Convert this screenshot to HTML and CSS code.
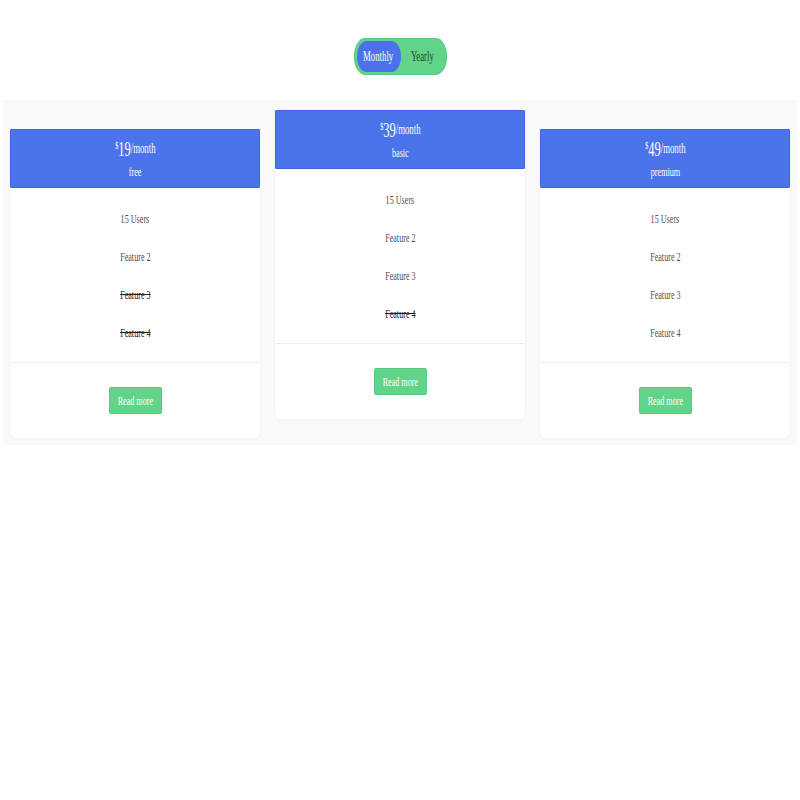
FILE: index.html
```html
<!DOCTYPE html>
<html lang="en">
<head>
<meta charset="utf-8">
<title>Pricing</title>
<link rel="stylesheet" href="styles.css">
</head>
<body>
<div class="toggle">
  <span class="seg active"><span class="sx">Monthly</span></span>
  <span class="seg"><span class="sx">Yearly</span></span>
</div>
<section class="plans">
  <article class="card side">
    <header class="head">
      <div class="price"><span class="sx"><sup>$</sup><span class="amt">19</span><span class="per">/month</span></span></div>
      <div class="name"><span class="sx">free</span></div>
    </header>
    <ul class="features">
      <li><span class="sx">15 Users</span></li>
      <li><span class="sx">Feature 2</span></li>
      <li class="off"><span class="sx">Feature 3</span></li>
      <li class="off"><span class="sx">Feature 4</span></li>
    </ul>
    <footer class="foot"><button class="btn"><span class="sx">Read more</span></button></footer>
  </article>
  <article class="card">
    <header class="head">
      <div class="price"><span class="sx"><sup>$</sup><span class="amt">39</span><span class="per">/month</span></span></div>
      <div class="name"><span class="sx">basic</span></div>
    </header>
    <ul class="features">
      <li><span class="sx">15 Users</span></li>
      <li><span class="sx">Feature 2</span></li>
      <li><span class="sx">Feature 3</span></li>
      <li class="off"><span class="sx">Feature 4</span></li>
    </ul>
    <footer class="foot"><button class="btn"><span class="sx">Read more</span></button></footer>
  </article>
  <article class="card side">
    <header class="head">
      <div class="price"><span class="sx"><sup>$</sup><span class="amt">49</span><span class="per">/month</span></span></div>
      <div class="name"><span class="sx">premium</span></div>
    </header>
    <ul class="features">
      <li><span class="sx">15 Users</span></li>
      <li><span class="sx">Feature 2</span></li>
      <li><span class="sx">Feature 3</span></li>
      <li><span class="sx">Feature 4</span></li>
    </ul>
    <footer class="foot"><button class="btn"><span class="sx">Read more</span></button></footer>
  </article>
</section>
</body>
</html>
```

FILE: styles.css
```css
html, body {
  margin: 0;
  padding: 0;
  background: #ffffff;
}
body {
  font-family: "Liberation Serif", "Times New Roman", serif;
  color: #444;
  padding-top: 38px;
}
.sx {
  display: inline-block;
  transform: scaleX(0.625);
  transform-origin: 50% 50%;
  white-space: nowrap;
}
.toggle {
  width: 87px;
  height: 31px;
  margin: 0 auto;
  padding: 3px;
  background: #62d48a;
  border-radius: 12px / 19px;
  display: flex;
  box-shadow: inset 0 0 0 1px #58cc80;
}
.seg {
  width: 43px;
  min-width: 0;
  flex: 0 0 43px;
  display: flex;
  align-items: center;
  justify-content: center;
  font-size: 14px;
  color: #2e3a32;
  border-radius: 10px / 16px;
  overflow: visible;
}
.seg.active {
  flex-basis: 44px;
  background: #4b72ea;
  color: #ffffff;
}
.plans {
  margin: 25px 3px 0;
  padding: 10px 7px 7px;
  background: #f9f9f9;
  display: flex;
  gap: 15px;
  align-items: flex-start;
}
.card {
  width: 250px;
  background: #ffffff;
  border-radius: 5px / 8px;
  box-shadow: 0 1px 3px rgba(0, 0, 0, 0.04);
  display: flex;
  flex-direction: column;
}
.card.side {
  margin-top: 19px;
}
.head {
  height: 57px;
  background: #4b73ea;
  border: 1px solid #3e66e2;
  border-radius: 1px / 2px;
  color: #ffffff;
  text-align: center;
  display: flex;
  flex-direction: column;
  align-items: center;
  justify-content: center;
}
.price {
  font-size: 14px;
  line-height: 22px;
}
.price sup {
  font-size: 10px;
  vertical-align: 7px;
}
.amt {
  font-size: 20px;
}
.per {
  vertical-align: 3px;
}
.name {
  font-size: 13px;
  line-height: 18px;
  margin-bottom: 2px;
}
.features {
  list-style: none;
  margin: 0;
  padding: 12px 0 10px;
  border-bottom: 1px solid #eeeeee;
  text-align: center;
}
.features li {
  height: 38px;
  line-height: 38px;
  font-size: 13px;
  color: #505050;
}
.features li.off {
  color: #222;
}
.features li.off .sx {
  text-decoration: line-through;
}
.foot {
  padding: 24px 0;
  display: flex;
  justify-content: center;
}
.btn {
  width: 53px;
  height: 27px;
  padding: 0;
  border: 1px solid #57c97f;
  border-radius: 2px / 3px;
  background: #62d48a;
  color: #ffffff;
  font-family: "Liberation Serif", "Times New Roman", serif;
  font-size: 13px;
  display: flex;
  align-items: center;
  justify-content: center;
}
```
